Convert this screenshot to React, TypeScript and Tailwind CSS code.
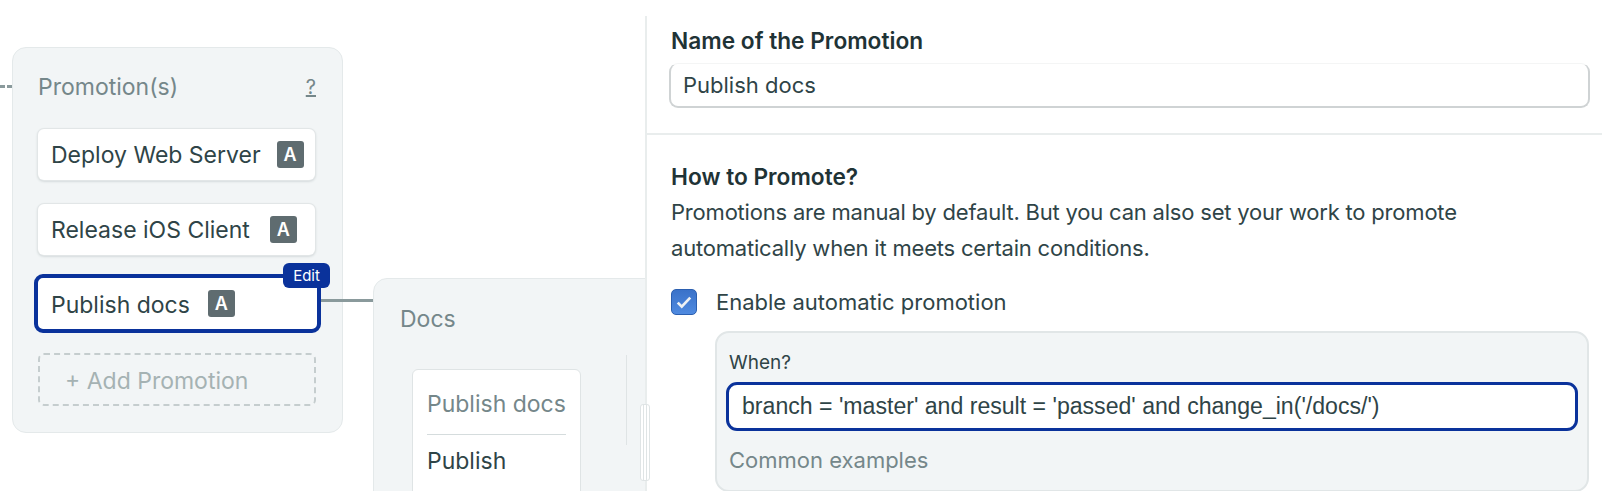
const font = "[font-family:Inter,'Liberation_Sans',sans-serif]";

function AutoBadge({ gap }: { gap: string }) {
  return (
    <span className={`${gap} flex h-[27px] w-[27px] shrink-0 items-center justify-center rounded-[3px] bg-[#5f6c70] text-[18px] font-semibold leading-none text-white`}>
      A
    </span>
  );
}

function PromotionItem({ label, gap }: { label: string; gap: string }) {
  return (
    <div className="ml-[1px] flex h-[51px] w-[277px] items-center rounded-[6px] bg-white pl-[13px] shadow-[0_0_0_1px_#e2e6e7,0_1px_3px_#b9c1c3]">
      <span className="whitespace-nowrap pt-[2px] text-[23px] text-[#2f4447]">{label}</span>
      <AutoBadge gap={gap} />
    </div>
  );
}

function Canvas() {
  return (
    <div className="relative h-full w-[645px] shrink-0 overflow-hidden bg-white">
      {/* dotted link coming in from the left */}
      <div className="absolute left-0 top-[85px] flex gap-[2px]">
        <span className="h-[3px] w-[5px] bg-[#8a9a9c]" />
        <span className="h-[3px] w-[5px] bg-[#8a9a9c]" />
      </div>

      <div className="absolute left-[12px] top-[47px] h-[386px] w-[331px] rounded-[14px] border border-[#e4e9ea] bg-[#f2f5f6] pl-[24px]">
        <div className="mt-[22px] flex h-[34px] w-[279px] items-center justify-between pl-[1px]">
          <span className="text-[23px] text-[#75878a]">Promotion(s)</span>
          <span className="text-[20px] text-[#75878a] underline">?</span>
        </div>
        <div className="mt-[25px]">
          <PromotionItem label="Deploy Web Server" gap="ml-[16px]" />
        </div>
        <div className="mt-[24px]">
          <PromotionItem label="Release iOS Client" gap="ml-[20px]" />
        </div>
        <div className="relative ml-[-3px] mt-[19px] flex h-[59px] w-[287px] items-center rounded-[9px] border-[4px] border-[#0a329b] bg-white pl-[13px]">
          <span className="pt-[3px] text-[23px] text-[#2f4447]">Publish docs</span>
          <AutoBadge gap="ml-[18px]" />
          <span className="absolute right-[-13px] top-[-15px] flex h-[25px] w-[47px] items-center justify-center rounded-[6px] bg-[#0a329b] pt-[2px] text-[15px] text-white">
            Edit
          </span>
        </div>
        <div className="ml-[1px] mt-[20px] flex h-[53px] w-[278px] items-center rounded-[6px] border-2 border-dashed border-[#c5cdce] pl-[25px] pt-[3px] text-[23px] text-[#a5b2b3]">
          + Add Promotion
        </div>
      </div>

      <div className="absolute left-[321px] top-[299px] h-[3px] w-[53px] bg-[#8a9a9c]" />

      <div className="absolute left-[373px] top-[278px] h-[240px] w-[300px] rounded-[14px] border border-[#e4e9ea] bg-[#f2f5f6]">
        <div className="ml-[26px] mt-[23px] text-[23px] leading-[34px] text-[#75878a]">Docs</div>
        <div className="ml-[38px] mt-[33px] h-[200px] w-[169px] rounded-[6px] border border-[#dfe4e5] bg-white px-[14px] pt-[17px]">
          <div className="whitespace-nowrap border-b border-[#d5dcdd] pb-[13px] text-[23px] leading-[34px] text-[#75878a]">Publish docs</div>
          <div className="mt-[9px] text-[23px] leading-[34px] text-[#2f4447]">Publish</div>
        </div>
      </div>
      <div className="absolute left-[626px] top-[355px] h-[90px] w-[1px] bg-[#dfe4e5]" />
    </div>
  );
}

function Panel() {
  return (
    <div className="mt-[16px] h-full min-w-0 flex-1 border-l-2 border-[#e9eded] bg-white text-[#2f4447]">
      <div className="border-b-2 border-[#e9eded] pb-[25px] pl-[24px] pr-[12px]">
        <div className="flex h-[48px] items-center pt-[2px] text-[22.7px] font-semibold text-[#1f3336]">Name of the Promotion</div>
        <div className="ml-[-2px] mt-[-1px] flex h-[45px] items-center rounded-[9px] border-x-2 border-b-2 border-t border-x-[#cfd3d4] border-b-[#cfd3d4] border-t-[#f4f5f5] pl-[12px] pt-[1px] text-[22px]">
          Publish docs
        </div>
      </div>
      <div className="pl-[24px] pr-[13px]">
        <div className="mt-[25px] text-[22.7px] font-semibold leading-[34px] text-[#1f3336]">How to Promote?</div>
        <p className="pt-[1px] text-[22px] leading-[35.5px] tracking-[-0.2px]">
          Promotions are manual by default. But you can also set your work to promote
          <br />
          automatically when it meets certain conditions.
        </p>
        <div className="mt-[23px] flex h-[26px] items-center">
          <span className="flex h-[26px] w-[26px] items-center justify-center rounded-[5px] border border-[#2b5fb0] bg-linear-to-b from-[#3a72c9] to-[#4f8ae0]">
            <svg viewBox="0 0 16 16" className="h-[20px] w-[20px]" fill="none" stroke="#eef1f4" strokeWidth="2.2">
              <path d="M3 8.5l3.2 3.2L13 4.5" />
            </svg>
          </span>
          <span className="ml-[19px] text-[22px]">Enable automatic promotion</span>
        </div>
        <div className="ml-[44px] mt-[16px] h-[161px] rounded-[14px] border-2 border-[#e1e6e7] bg-[#f2f5f6] pl-[9px] pr-[9px]">
          <div className="ml-[3px] mt-[17px] text-[19px] leading-[26px]">When?</div>
          <div className="mt-[6px] flex h-[49px] items-center rounded-[11px] border-[3px] border-[#0a329b] bg-white pl-[13px] font-['Liberation_Sans'] text-[23.1px]">
            branch = 'master' and result = 'passed' and change_in('/docs/')
          </div>
          <div className="ml-[3px] mt-[17px] text-[22px] leading-[24px] text-[#75878a]">Common examples</div>
        </div>
      </div>
    </div>
  );
}

export default function App() {
  return (
    <div className={`relative flex h-[491px] w-[1602px] overflow-hidden bg-white ${font}`}>
      <Canvas />
      <Panel />
      <div className="absolute left-[640px] top-[404px] flex h-[77px] w-[10px] justify-center rounded-[3px] border border-[#dfe4e5] bg-white">
        <span className="w-[4px] border-x border-[#dfe4e5]" />
      </div>
    </div>
  );
}
